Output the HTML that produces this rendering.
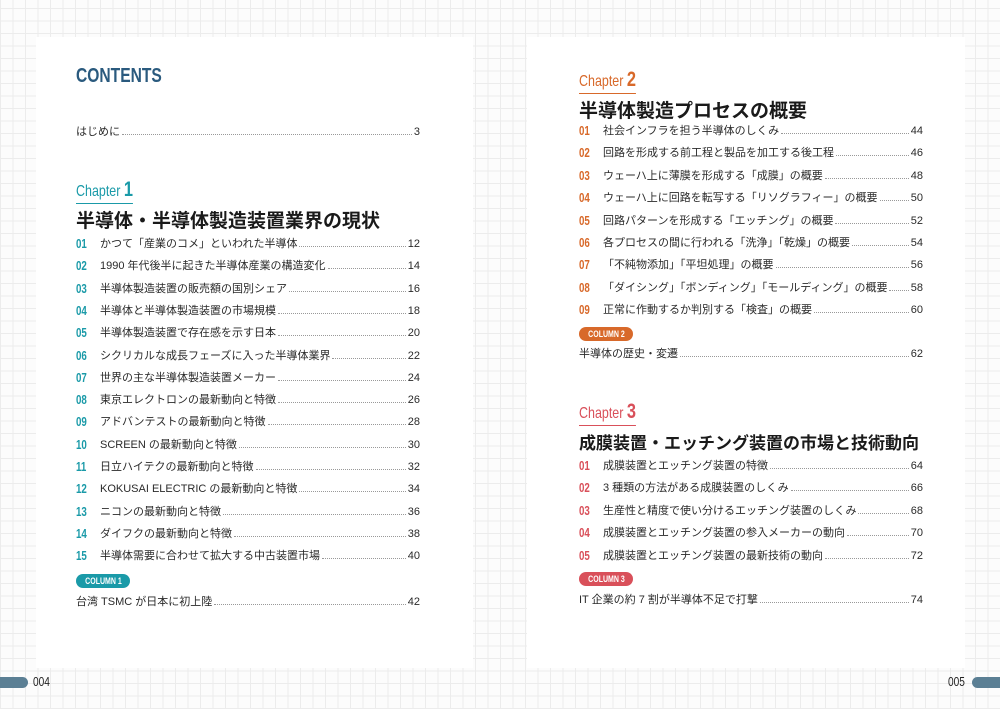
<!DOCTYPE html>
<html><head><meta charset="utf-8"><style>
*{margin:0;padding:0}
body{width:1000px;height:709px;position:relative;overflow:hidden;font-family:"Liberation Sans","Noto Sans CJK JP",sans-serif;color:#222;
background-color:#fcfcfc;
background-image:repeating-linear-gradient(0deg,#ececec 0 1px,transparent 1px 12.5px),repeating-linear-gradient(90deg,#ececec 0 1px,transparent 1px 12.5px);}
.pg{position:absolute;background:#fff;top:37px;height:631px}
.a{position:absolute;white-space:nowrap}
.cn{display:inline-block;transform:scaleX(.78);transform-origin:left center}
.row{position:absolute;height:16px;font-size:11px;line-height:16px;display:flex;white-space:nowrap;color:#2a2a2a}
.row .n{width:24px;font-weight:bold;font-size:13px}
.row .n i{font-style:normal;display:inline-block;transform:scaleX(.75);transform-origin:left center}
.row .d{flex:1;border-bottom:1px dotted #999;margin:0 2px 5px}
.ch{font-size:16px}
.ch .cn{border-bottom:1px solid currentColor;padding-bottom:1px}
.ch b{font-size:21px}
.tt{font-size:19px;font-weight:bold;color:#1a1a1a}
.col{position:absolute;color:#fff;font-size:9px;font-weight:bold;border-radius:8px;height:14px;line-height:14px;width:54px;text-align:center}
.col .cn{transform-origin:center}
</style></head><body>
<div class="pg" style="left:36px;width:437px"></div>
<div class="pg" style="left:527px;width:438px"></div>
<div class="a" style="left:76px;top:65px;font-size:20px;font-weight:bold;color:#2a5a7e"><span class="cn">CONTENTS</span></div>
<div class="row" style="left:76px;top:124px;width:344px"><span>はじめに</span><span class="d"></span><span>3</span></div>
<div class="a ch" style="left:76px;top:178px;color:#1a9aa8"><span class="cn">Chapter <b>1</b></span></div>
<div class="a tt" style="left:76px;top:206px">半導体・半導体製造装置業界の現状</div>
<div class="col" style="left:76px;top:574px;background:#1a9aa8"><span class="cn">COLUMN 1</span></div>
<div class="row" style="left:76px;top:594px;width:344px"><span>台湾 TSMC が日本に初上陸</span><span class="d"></span><span>42</span></div>

<div class="a ch" style="left:579px;top:68px;color:#d8692a"><span class="cn">Chapter <b>2</b></span></div>
<div class="a tt" style="left:579px;top:96px">半導体製造プロセスの概要</div>
<div class="col" style="left:579px;top:327px;background:#d8692a"><span class="cn">COLUMN 2</span></div>
<div class="row" style="left:579px;top:346px;width:344px"><span>半導体の歴史・変遷</span><span class="d"></span><span>62</span></div>
<div class="a ch" style="left:579px;top:400px;color:#d9505a"><span class="cn">Chapter <b>3</b></span></div>
<div class="a tt" style="left:579px;top:429px;font-size:17px">成膜装置・エッチング装置の市場と技術動向</div>
<div class="col" style="left:579px;top:572px;background:#d9505a"><span class="cn">COLUMN 3</span></div>
<div class="row" style="left:579px;top:592px;width:344px"><span>IT 企業の約 7 割が半導体不足で打撃</span><span class="d"></span><span>74</span></div>

<div class="a" style="left:0;top:677px;width:28px;height:11px;background:#5b7f94;border-radius:0 6px 6px 0"></div>
<div class="a" style="left:33px;top:674px;font-size:13px"><span class="cn">004</span></div>
<div class="a" style="left:972px;top:677px;width:28px;height:11px;background:#5b7f94;border-radius:6px 0 0 6px"></div>
<div class="a" style="left:948px;top:674px;font-size:13px"><span class="cn">005</span></div>
<script>
function rows(x,y0,step,c,items){let h='';items.forEach((t,i)=>{h+=`<div class="row" style="left:${x}px;top:${y0+i*step}px;width:344px"><span class="n" style="color:${c}"><i>${String(i+1).padStart(2,'0')}</i></span><span>${t[0]}</span><span class="d"></span><span>${t[1]}</span></div>`});document.body.insertAdjacentHTML('beforeend',h)}
rows(76,236,22.3,'#1a9aa8',[["かつて「産業のコメ」といわれた半導体",12],["1990 年代後半に起きた半導体産業の構造変化",14],["半導体製造装置の販売額の国別シェア",16],["半導体と半導体製造装置の市場規模",18],["半導体製造装置で存在感を示す日本",20],["シクリカルな成長フェーズに入った半導体業界",22],["世界の主な半導体製造装置メーカー",24],["東京エレクトロンの最新動向と特徴",26],["アドバンテストの最新動向と特徴",28],["SCREEN の最新動向と特徴",30],["日立ハイテクの最新動向と特徴",32],["KOKUSAI ELECTRIC の最新動向と特徴",34],["ニコンの最新動向と特徴",36],["ダイフクの最新動向と特徴",38],["半導体需要に合わせて拡大する中古装置市場",40]]);
rows(579,123,22.4,'#d8692a',[["社会インフラを担う半導体のしくみ",44],["回路を形成する前工程と製品を加工する後工程",46],["ウェーハ上に薄膜を形成する「成膜」の概要",48],["ウェーハ上に回路を転写する「リソグラフィー」の概要",50],["回路パターンを形成する「エッチング」の概要",52],["各プロセスの間に行われる「洗浄」「乾燥」の概要",54],["「不純物添加」「平坦処理」の概要",56],["「ダイシング」「ボンディング」「モールディング」の概要",58],["正常に作動するか判別する「検査」の概要",60]]);
rows(579,458,22.4,'#d9505a',[["成膜装置とエッチング装置の特徴",64],["3 種類の方法がある成膜装置のしくみ",66],["生産性と精度で使い分けるエッチング装置のしくみ",68],["成膜装置とエッチング装置の参入メーカーの動向",70],["成膜装置とエッチング装置の最新技術の動向",72]]);
</script>
</body></html>
